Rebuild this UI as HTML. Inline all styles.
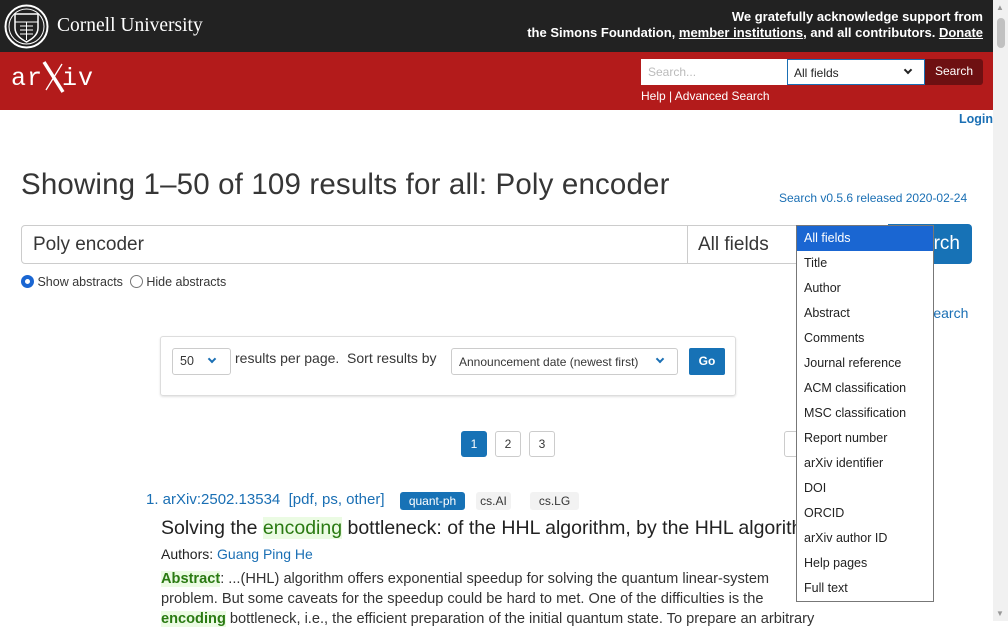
<!DOCTYPE html>
<html><head><meta charset="utf-8"><style>
*{box-sizing:border-box;margin:0;padding:0}
body{width:1008px;height:621px;overflow:hidden;font-family:"Liberation Sans","DejaVu Sans",sans-serif;background:#fff;position:relative;color:#363636}
.a{position:absolute;white-space:nowrap}
.blue{color:#1a6fb4}
#sb{position:absolute;right:0;top:0;width:15px;height:621px;background:#f1f1f1}
.dd div{height:25px;line-height:25px;padding-left:7px;font-size:12.5px;color:#222}
.chev{position:absolute;display:inline-block;width:6px;height:6px;border-right:2px solid;border-bottom:2px solid;transform:rotate(45deg)}
</style></head><body>
<div class="a" style="left:0;top:0;width:993px;height:52px;background:#222"></div>
<svg class="a" style="left:4px;top:4px" width="45" height="45" viewBox="0 0 45 45"><circle cx="22.5" cy="22.5" r="21" fill="none" stroke="#fff" stroke-width="2"/><circle cx="22.5" cy="22.5" r="17.5" fill="none" stroke="#fff" stroke-width="1"/><path d="M11 10h23v14c0 7-6 11-11.5 14C17 35 11 31 11 24z" fill="none" stroke="#fff" stroke-width="1.5"/><path d="M11 18h23M22.5 18v18M16 22h13M16 26h13M16 30h13" stroke="#fff" stroke-width="1"/></svg>
<div class="a" style="left:57px;top:15px;font-family:'Liberation Serif',serif;font-size:19.5px;color:#fff">Cornell University</div>
<div class="a" style="right:25px;top:9px;color:#fff;font-weight:bold;font-size:13px;text-align:right;line-height:16px">We gratefully acknowledge support from<br>the Simons Foundation, <u>member institutions</u>, and all contributors. <u>Donate</u></div>
<div class="a" style="left:0;top:52px;width:993px;height:58px;background:#b31b1b"></div>
<div class="a" style="left:11px;top:64px;font-family:'Liberation Mono',monospace;font-size:25px;color:#fff;letter-spacing:1px">ar<span style="display:inline-block;width:19px;position:relative">&nbsp;<svg style="position:absolute;left:-2px;top:-5px" width="24" height="36"><path d="M3 3L22 33" stroke="#fff" stroke-width="3.5"/><path d="M21 5L5 31" stroke="#fff" stroke-width="1.3"/></svg></span>iv</div>
<div class="a" style="left:641px;top:59px;width:146px;height:26px;background:#fff;font-size:12px;color:#bbb;padding:6px 7px">Search...</div>
<div class="a" style="left:787px;top:59px;width:138px;height:26px;background:#fff;border:1px solid #1a6fb4;font-size:12px;color:#222;padding:6px 6px">All fields<span class="chev" style="right:13px;top:7px;color:#222"></span></div>
<div class="a" style="left:925px;top:59px;width:58px;height:26px;background:#6e1012;color:#fff;font-size:12px;padding:5px 0;text-align:center;border-radius:0 3px 3px 0">Search</div>
<div class="a" style="left:641px;top:89px;color:#fff;font-size:12px">Help | Advanced Search</div>
<div class="a" style="left:959px;top:112px;font-weight:bold;font-size:12.5px" ><span class="blue">Login</span></div>
<div class="a" style="left:21px;top:168px;font-size:29.5px;color:#363636;letter-spacing:0.15px">Showing 1–50 of 109 results for all: Poly encoder</div>
<div class="a blue" style="left:779px;top:191px;font-size:12px">Search v0.5.6 released 2020-02-24</div>
<div class="a" style="left:21px;top:225px;width:667px;height:39px;border:1px solid #ccc;border-radius:4px 0 0 4px;font-size:19px;padding:8px 11px;color:#363636">Poly encoder</div>
<div class="a" style="left:687px;top:225px;width:205px;height:39px;border:1px solid #ccc;font-size:19px;padding:8px 10px;color:#363636">All fields</div>
<div class="a" style="left:888px;top:224px;width:84px;height:40px;background:#1772b6;border-radius:0 4px 4px 0;color:#fff;font-size:19px;padding:9px 12px 0 0;text-align:right">Search</div>
<div class="a" style="left:21px;top:275px;font-size:12.5px;color:#363636"><span style="display:inline-block;width:13px;height:13px;border-radius:50%;border:4px solid #1a66d2;vertical-align:-2px"></span> Show abstracts &nbsp;<span style="display:inline-block;width:13px;height:13px;border-radius:50%;border:1px solid #777;vertical-align:-2px"></span> Hide abstracts</div>
<div class="a blue" style="left:924px;top:305px;font-size:14px">Search</div>
<div class="a" style="left:160px;top:336px;width:576px;height:60px;border:1px solid #ddd;border-radius:3px;box-shadow:0 1px 2px rgba(0,0,0,.12)"></div>
<div class="a" style="left:172px;top:348px;width:59px;height:27px;border:1px solid #ccc;border-radius:3px;font-size:12.5px;padding:5px 7px">50<span class="chev blue" style="right:15px;top:7px"></span></div>
<div class="a" style="left:235px;top:350px;font-size:14px">results per page. &nbsp;Sort results by</div>
<div class="a" style="left:451px;top:348px;width:227px;height:27px;border:1px solid #ccc;border-radius:3px;font-size:12px;padding:6px 7px">Announcement date (newest first)<span class="chev blue" style="right:14px;top:7px"></span></div>
<div class="a" style="left:689px;top:348px;width:36px;height:27px;background:#1772b6;color:#fff;border-radius:2px;font-size:12px;font-weight:bold;text-align:center;padding-top:6px">Go</div>
<div class="a" style="left:461px;top:431px;width:26px;height:26px;background:#1772b6;border-radius:3px;color:#fff;font-size:12px;text-align:center;line-height:26px">1</div>
<div class="a" style="left:495px;top:431px;width:26px;height:26px;border:1px solid #ccc;border-radius:3px;font-size:12px;text-align:center;line-height:24px">2</div>
<div class="a" style="left:529px;top:431px;width:26px;height:26px;border:1px solid #ccc;border-radius:3px;font-size:12px;text-align:center;line-height:24px">3</div>
<div class="a" style="left:784px;top:431px;width:30px;height:26px;border:1px solid #ccc;border-radius:3px"></div>
<div class="a" style="left:146px;top:491px;font-size:15px"><span style="color:#1a6fb4">1. arXiv:2502.13534</span> &nbsp;<span class="blue">[pdf, ps, other]</span></div>
<div class="a" style="left:400px;top:492px;width:65px;height:18px;background:#1772b6;border-radius:3px;color:#fff;font-size:12px;text-align:center;line-height:18px">quant-ph</div>
<div class="a" style="left:476px;top:492px;width:35px;height:18px;background:#f2f2f2;border-radius:3px;font-size:12px;text-align:center;line-height:18px">cs.AI</div>
<div class="a" style="left:530px;top:492px;width:49px;height:18px;background:#f2f2f2;border-radius:3px;font-size:12px;text-align:center;line-height:18px">cs.LG</div>
<div class="a" style="left:161px;top:517px;font-size:19.5px;color:#222">Solving the <span style="background:#ebfbe3;color:#2a7a12">encoding</span> bottleneck: of the HHL algorithm, by the HHL algorithm</div>
<div class="a" style="left:161px;top:546px;font-size:14px;color:#222">Authors: <span class="blue">Guang Ping He</span></div>
<div class="a" style="left:161px;top:569px;font-size:14.6px;line-height:20px;color:#333"><b style="background:#ebfbe3;color:#2a7a12">Abstract</b>: ...(HHL) algorithm offers exponential speedup for solving the quantum linear-system<br>problem. But some caveats for the speedup could be hard to met. One of the difficulties is the<br><b style="background:#ebfbe3;color:#2a7a12">encoding</b> bottleneck, i.e., the efficient preparation of the initial quantum state. To prepare an arbitrary</div>
<div class="a dd" style="left:796px;top:225px;width:138px;height:377px;background:#fff;border:1px solid #777">
<div style="background:#1a66d2;color:#fff">All fields</div><div>Title</div><div>Author</div><div>Abstract</div><div>Comments</div><div>Journal reference</div><div>ACM classification</div><div>MSC classification</div><div>Report number</div><div>arXiv identifier</div><div>DOI</div><div>ORCID</div><div>arXiv author ID</div><div>Help pages</div><div>Full text</div></div>
<div id="sb"><div style="position:absolute;left:4px;top:18px;width:8px;height:30px;background:#c1c1c1;border-radius:4px"></div><div style="position:absolute;left:3px;top:3px;font-size:8px;color:#999">▲</div><div style="position:absolute;left:3px;bottom:3px;font-size:8px;color:#999">▼</div></div>
</body></html>
